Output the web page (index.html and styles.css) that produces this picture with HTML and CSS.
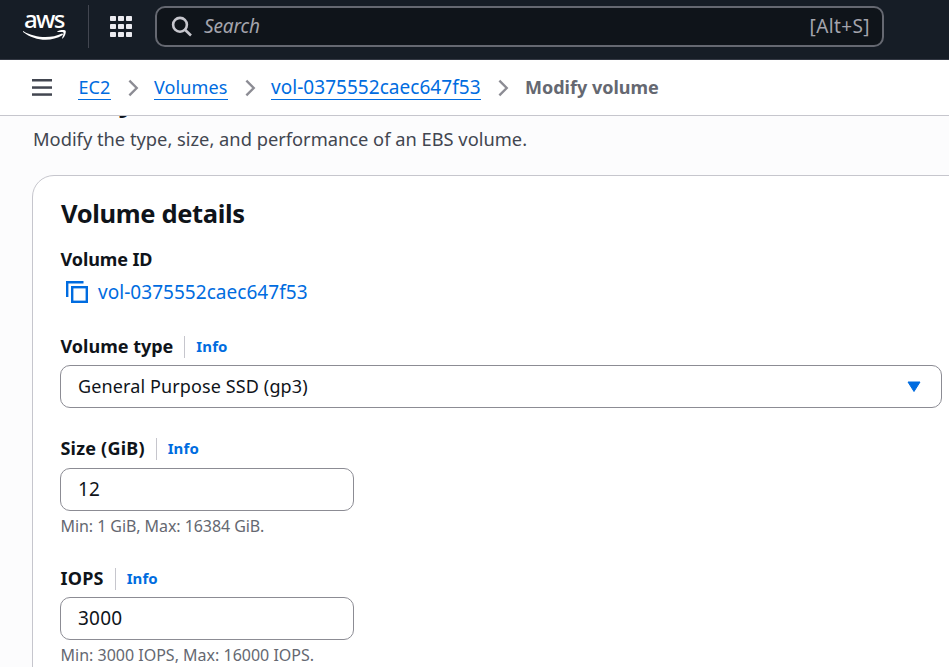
FILE: index.html
```html
<!DOCTYPE html>
<html lang="en">
<head>
<meta charset="utf-8">
<title>Modify volume</title>
<link rel="stylesheet" href="styles.css">
</head>
<body>
<header class="topbar">
  <a class="logo">
    <span class="logo-text">aws</span>
    <svg class="smile" width="44" height="12" viewBox="0 0 44 12" fill="#fff"><path d="M.5 1.2C12 8.400 29 8.300 38.500 3.700c1.200-.5 2 .7.900 1.600C28 12.300 11.500 11 .1 2 -.3 1.500 0 .9.500 1.200z"/><path d="M34.500 1.300C37.500-.8 42 0 42.600.7c.6.900-.2 5-2.700 7.500-.5.500-1 .3-.8-.3.700-1.500 1.900-4.700 1.300-5.500-.6-.7-3.900-.4-5.400-.3-.6.100-1-.4-.5-.8z"/></svg>
  </a>
  <span class="rule"></span>
  <svg class="apps" width="22" height="21" viewBox="0 0 22 21" fill="#ebebf0"><rect width="6" height="5" rx=".8"/><rect x="8" width="6" height="5" rx=".8"/><rect x="16" width="6" height="5" rx=".8"/><rect y="8" width="6" height="5" rx=".8"/><rect x="8" y="8" width="6" height="5" rx=".8"/><rect x="16" y="8" width="6" height="5" rx=".8"/><rect y="16" width="6" height="5" rx=".8"/><rect x="8" y="16" width="6" height="5" rx=".8"/><rect x="16" y="16" width="6" height="5" rx=".8"/></svg>
  <div class="search">
    <svg width="22" height="22" viewBox="0 0 22 22" fill="none" stroke="#c6c6cd" stroke-width="2.600"><circle cx="9" cy="8.800" r="6.900"/><path d="M14 13.700l6 5.800"/></svg>
    <span class="placeholder">Search</span>
    <span class="shortcut">[Alt+S]</span>
  </div>
</header>
<nav class="crumbs">
  <svg class="menu" width="20" height="17" viewBox="0 0 20 17" fill="#424650"><rect width="20" height="2.500"/><rect y="7.300" width="20" height="2.500"/><rect y="14.300" width="20" height="2.500"/></svg>
  <a class="crumb ec2">EC2</a>
  <svg class="chev" width="12" height="18" viewBox="0 0 12 18"><path d="M1.500 1l8 8-8 8"/></svg>
  <a class="crumb volumes">Volumes</a>
  <svg class="chev" width="12" height="18" viewBox="0 0 12 18"><path d="M1.500 1l8 8-8 8"/></svg>
  <a class="crumb volid">vol-0375552caec647f53</a>
  <svg class="chev" width="12" height="18" viewBox="0 0 12 18"><path d="M1.500 1l8 8-8 8"/></svg>
  <span class="current">Modify volume</span>
</nav>
<main>
  <h1>Modify volume</h1>
  <p class="intro">Modify the type, size, and performance of an EBS volume.</p>
  <section class="card">
    <h2>Volume details</h2>
    <div class="label idlabel"><span>Volume ID</span></div>
    <div class="idrow">
      <svg width="22" height="22" viewBox="0 0 22 22" fill="none" stroke="#006ce0" stroke-width="2.400"><path d="M1.200 16V1.200H17.500"/><rect x="6.200" y="6.200" width="14.600" height="14.600"/></svg>
      <a class="idlink">vol-0375552caec647f53</a>
    </div>
    <div class="field type">
      <div class="label"><span class="l-type">Volume type</span><i></i><a>Info</a></div>
      <div class="control select"><span class="v-type">General Purpose SSD (gp3)</span>
        <svg width="14" height="12" viewBox="0 0 14 12"><path d="M1 1h12L7 10.500z" fill="#006ce0" stroke="#006ce0" stroke-linejoin="round"/></svg>
      </div>
    </div>
    <div class="field size">
      <div class="label"><span class="l-size">Size (GiB)</span><i></i><a>Info</a></div>
      <div class="control"><span class="num">12</span></div>
      <p class="hint h-size">Min: 1 GiB, Max: 16384 GiB.</p>
    </div>
    <div class="field iops">
      <div class="label"><span class="l-iops">IOPS</span><i></i><a>Info</a></div>
      <div class="control"><span class="num">3000</span></div>
      <p class="hint h-iops">Min: 3000 IOPS, Max: 16000 IOPS.</p>
    </div>
  </section>
</main>
</body>
</html>
```
FILE: styles.css
```css
* { box-sizing: border-box; }
html, body { height: 100%; }
body { margin: 0; overflow: hidden; display: flex; flex-direction: column; background: #fcfcfd; color: #0f141a; font: 18px/24px "Noto Sans", sans-serif; white-space: nowrap; }
h1, h2, p { margin: 0; }
svg { display: block; flex: none; }
.topbar { flex: none; height: 60px; display: flex; align-items: flex-start; background: #161d26; border-bottom: 1px solid #333843; }
.logo { width: 43px; margin: 6px 0 0 23px; height: 34px; display: flex; flex-direction: column; }
.logo-text { height: 24px; line-height: 25px; padding-left: 1px; color: #fff; font-size: 24px; font-weight: 500; letter-spacing: -1.7px; }
.rule { width: 1px; height: 43px; margin: 5px 0 0 22px; background: #424650; }
.apps { margin: 16px 0 0 21px; }
.search { width: 729px; height: 41px; margin: 6px 0 0 23px; padding: 0 12px 2px 14px; display: flex; align-items: center; border: 2px solid #656871; border-radius: 10px; background: #0f141a; }
.search svg { margin-top: 2px; }
.placeholder { margin-left: 11px; color: #a4a4ad; font-style: italic; font-size: 19px; letter-spacing: -.15px; }
.shortcut { margin-left: auto; color: #a4a4ad; font-size: 19px; letter-spacing: .4px; }
.crumbs { flex: none; height: 56px; padding-left: 32px; display: flex; align-items: center; background: #fff; border-bottom: 1px solid #c6c6cd; }
.menu { margin: 0 26px 0 0; }
.crumb { height: 24px; line-height: 22px; border-bottom: 1px solid #006ce0; color: #006ce0; }
.ec2 { width: 33px; padding-left: .5px; }
.volumes { width: 74px; letter-spacing: .1px; }
.volid { width: 210px; }
.volid, .idlink { font-size: 19px; letter-spacing: .04px; }
.chev { width: 11px; margin: 0 15px 0 17px; fill: none; stroke: #8c8c94; stroke-width: 2.600; }
.volumes + .chev { margin-right: 15px; }
.current { height: 24px; line-height: 22px; margin-left: 1px; color: #656871; font-weight: 700; }
main { flex: 1; min-height: 0; padding-left: 32px; overflow: hidden; }
h1 { height: 36px; margin-top: -34px; font-size: 30px; line-height: 36px; }
.intro { height: 24px; margin: 9px 0 24px 1px; color: #424650; font-size: 18.3px; }
.card { width: 960px; height: 620px; padding: 21px 0 0 28px; border: 1px solid #c6c6cd; border-radius: 22px; background: #fff; }
h2 { height: 32px; font-size: 25.5px; line-height: 32px; letter-spacing: -.35px; }
.label { height: 24px; margin-left: -.5px; display: flex; align-items: center; font-weight: 700; }
.idlabel { margin-top: 18px; letter-spacing: -.1px; }
.idrow { height: 24px; margin-top: 9px; padding-left: 5px; display: flex; align-items: center; gap: 10px; color: #006ce0; }
.label i { width: 1px; height: 22px; margin: 2px 11px 0 11px; background: #c6c6cd; }
.label a { color: #006ce0; font-size: 15px; letter-spacing: .1px; }
.l-size, .l-iops { letter-spacing: .2px; }
.type { margin-top: 30px; }
.size { margin-top: 28px; }
.size .control { margin-top: 8px; }
.iops { margin-top: 29px; }
.control { width: 294px; height: 43px; margin: 7px 0 0 -1px; padding: 0 20px 0 17px; display: flex; align-items: center; justify-content: space-between; border: 1px solid #8c8c94; border-radius: 10px; }
.control span { margin-top: -1px; }
.num { font-size: 19px; letter-spacing: .2px; }
.v-type { letter-spacing: .12px; }
.select { width: 882px; }
.hint { height: 22px; margin: 4px 0 0 -.5px; color: #656871; font-size: 16px; line-height: 22px; }
.h-size { letter-spacing: -.06px; }
```
